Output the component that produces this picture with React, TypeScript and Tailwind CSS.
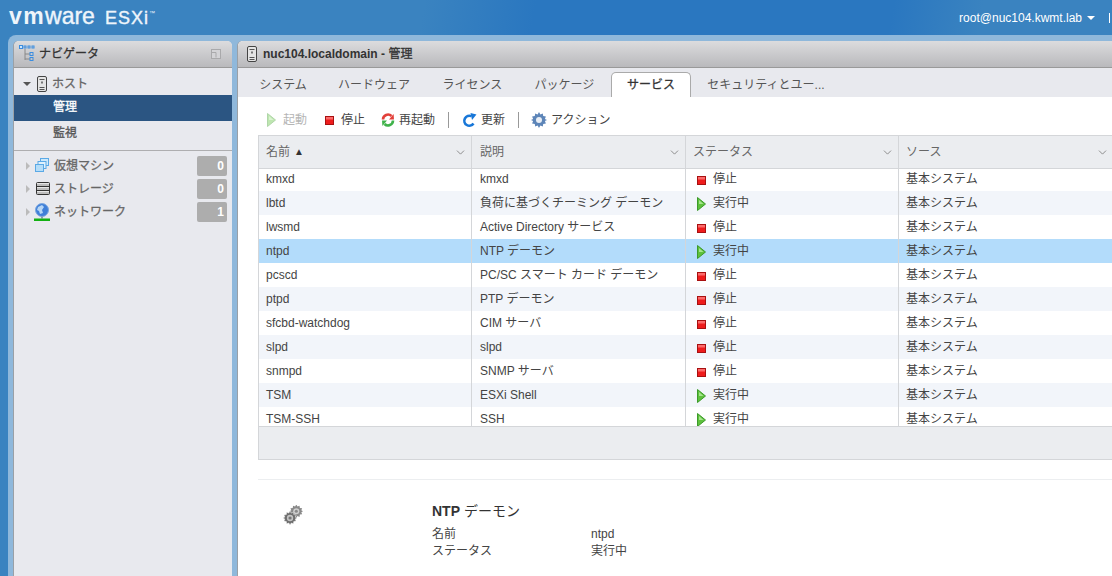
import React from 'react';
import { ChevronDown } from 'lucide-react';

const services = [
  ['kmxd', 'kmxd', false],
  ['lbtd', '負荷に基づくチーミング デーモン', true],
  ['lwsmd', 'Active Directory サービス', false],
  ['ntpd', 'NTP デーモン', true],
  ['pcscd', 'PC/SC スマート カード デーモン', false],
  ['ptpd', 'PTP デーモン', false],
  ['sfcbd-watchdog', 'CIM サーバ', false],
  ['slpd', 'slpd', false],
  ['snmpd', 'SNMP サーバ', false],
  ['TSM', 'ESXi Shell', true],
  ['TSM-SSH', 'SSH', true],
] as const;

const gearPath =
  'M8 0l1.4 2.4 2.4-1 .4 2.7 2.7.4-1 2.4L16 8l-2.1 1.1 1 2.4-2.7.4-.4 2.7-2.4-1L8 16l-1.4-2.4-2.4 1-.4-2.7-2.7-.4 1-2.4L0 8l2.1-1.1-1-2.4 2.7-.4.4-2.7 2.4 1Z';

const ServerIcon = ({ className = '' }: { className?: string }) => (
  <svg width="10" height="16" viewBox="0 0 10 16" className={className}>
    <rect x="0.5" y="0.5" width="9" height="15" rx="1.5" fill="#e4e4e4" stroke="#444" />
    <path d="M2.5 3.5h5M2.5 11.5h5M2.5 13.5h5" stroke="#555" />
    <rect x="4" y="5.5" width="2" height="2" fill="#777" />
  </svg>
);

const PlayIcon = ({ faded = false }: { faded?: boolean }) => (
  <svg width="9" height="14" viewBox="0 0 9 14" className={faded ? 'opacity-40' : ''}>
    <path d="M0.5 0.5L8.5 7L0.5 13.5Z" fill="#5ec13c" stroke="#3c9a2a" />
    <path d="M2 3L6.5 7L2 7Z" fill="#a5e58d" />
  </svg>
);

const StopIcon = () => (
  <svg width="9" height="9" viewBox="0 0 9 9">
    <rect x="0.5" y="0.5" width="8" height="8" fill="#ee1c1c" stroke="#a81010" />
    <rect x="1" y="1" width="7" height="2.5" fill="#fb6a6a" />
  </svg>
);

const RestartIcon = () => (
  <svg width="14" height="14" viewBox="0 0 14 14" fill="none">
    <path d="M2 6.5A5 5 0 0 1 10.5 3" stroke="#e2403a" strokeWidth="2.6" />
    <path d="M8 6.5L13 6.5L12.6 1Z" fill="#e2403a" />
    <path d="M12 7.5A5 5 0 0 1 3.5 11" stroke="#3fb24a" strokeWidth="2.6" />
    <path d="M6 7.5L1 7.5L1.4 13Z" fill="#3fb24a" />
  </svg>
);

const RefreshIcon = () => (
  <svg width="15" height="15" viewBox="0 0 15 15" fill="none">
    <path d="M11.5 10.5A5 5 0 1 1 9.5 3.2" stroke="#1877d8" strokeWidth="2.6" />
    <path d="M8.5 0L14.5 1.5L10 7Z" fill="#1877d8" />
  </svg>
);

const GearIcon = () => (
  <svg width="16" height="16" viewBox="0 0 16 16">
    <path d={gearPath} fill="#5d85b8" />
    <circle cx="8" cy="8" r="3" fill="#e9eef5" />
  </svg>
);

const ServicesGears = () => (
  <svg width="20" height="20" viewBox="0 0 20 20">
    <g transform="translate(6.5 -0.5) scale(0.85)">
      <path d={gearPath} fill="#8a8a8a" />
      <circle cx="8" cy="8" r="3.6" fill="#cfcfcf" />
      <circle cx="8" cy="8" r="1.8" fill="#8a8a8a" />
    </g>
    <g transform="translate(0 6) scale(0.88)">
      <path d={gearPath} fill="#6e6e6e" stroke="#fff" strokeWidth="0.5" />
      <circle cx="8" cy="8" r="3.6" fill="#c4c4c4" />
      <circle cx="8" cy="8" r="1.8" fill="#777" />
    </g>
  </svg>
);

const NavigatorIcon = () => (
  <svg width="16" height="18" viewBox="0 0 16 18" fill="none">
    <path d="M6 4v11M6 9h5M6 14h5" stroke="#888" />
    <rect x="0.5" y="0.5" width="3" height="3" fill="#cfe6fb" stroke="#3b8de0" />
    <rect x="5" y="1" width="2" height="2" stroke="#3b8de0" />
    <rect x="9" y="1" width="2" height="2" stroke="#3b8de0" />
    <rect x="13" y="1" width="2" height="2" stroke="#3b8de0" />
    <rect x="11" y="7.5" width="3" height="3" stroke="#3b8de0" />
    <rect x="11" y="12.5" width="3" height="3" stroke="#3b8de0" />
  </svg>
);

const MinimizeIcon = () => (
  <svg width="10" height="10" viewBox="0 0 10 10">
    <rect x="0.5" y="0.5" width="9" height="9" fill="#d3d3d6" stroke="#a9a9ab" />
    <path d="M1 3.5h4v5" fill="none" stroke="#a9a9ab" />
  </svg>
);

const VmIcon = () => (
  <svg width="15" height="15" viewBox="0 0 15 15">
    <rect x="5.5" y="0.5" width="8" height="7" fill="#cde8fb" stroke="#5aa9e6" />
    <rect x="3" y="3.5" width="8" height="7" fill="#dff1fd" stroke="#5aa9e6" />
    <rect x="0.5" y="6.5" width="8" height="7" fill="#b5ddf8" stroke="#5aa9e6" />
  </svg>
);

const StorageIcon = () => (
  <svg width="14" height="13" viewBox="0 0 14 13">
    <rect x="0.5" y="0.5" width="13" height="12" rx="1" fill="#bdbdbd" stroke="#333" />
    <path d="M1 4.5h12M1 8.5h12" stroke="#333" />
    <path d="M1 1.5h12M1 5.5h12M1 9.5h12" stroke="#e6e6e6" />
  </svg>
);

const NetworkIcon = () => (
  <svg width="17" height="18" viewBox="0 0 17 18">
    <circle cx="8" cy="7" r="6.5" fill="#3f7fd8" stroke="#7da7df" />
    <path d="M4 4l4-2 2 2-2 3 1 3-3 1-1-3-2-1Z" fill="#b7d6f5" />
    <path d="M7 13.5h2v2H7z" fill="#8a9bb0" />
    <rect x="0" y="15.5" width="16" height="2.5" fill="#12b012" />
  </svg>
);

const Caret = ({ open = false }: { open?: boolean }) =>
  open ? (
    <div className="h-0 w-0 border-x-[4px] border-t-[4px] border-x-transparent border-t-[#555]" />
  ) : (
    <div className="h-0 w-0 border-y-[4px] border-l-[4px] border-y-transparent border-l-[#bbb]" />
  );

const NavItem = ({ icon, label, count }: { icon: React.ReactNode; label: string; count: number }) => (
  <div className="flex h-[23px] items-center pl-[11px] pr-[5px] text-xs text-[#666] [-webkit-text-stroke:0.3px]">
    <Caret />
    <div className="flex w-[23px] justify-center pl-[2px]">{icon}</div>
    <span className="ml-px flex-1">{label}</span>
    <div className="flex h-5 w-[30px] items-center justify-end rounded-[2px] bg-[#adadad] pr-[3px] text-xs font-bold text-white [-webkit-text-stroke:0]">
      {count}
    </div>
  </div>
);

const ToolButton = ({ icon, label, muted = false, iconWidth = 'w-[18px]' }: { icon: React.ReactNode; label: string; muted?: boolean; iconWidth?: string }) => (
  <div className={`flex items-center gap-[2px] text-xs ${muted ? 'text-[#b5b5b5]' : 'text-[#444]'}`}>
    <div className={`flex justify-start ${iconWidth}`}>{icon}</div>
    <span>{label}</span>
  </div>
);

const HeaderCell = ({ label, sorted = false, pad = 'pl-[7px]' }: { label: string; sorted?: boolean; pad?: string }) => (
  <div className={`flex items-center border-r border-[#d4d6d9] pr-[4px] text-xs text-[#666] last:border-r-0 ${pad}`}>
    <span>{label}</span>
    {sorted && <span className="ml-1 text-[10px] text-[#333]">▲</span>}
    <ChevronDown size={13} strokeWidth={1.5} className="ml-auto text-[#777]" />
  </div>
);

export default function App() {
  return (
    <div className="flex h-[576px] w-[1112px] flex-col overflow-hidden bg-[#3a83c0] font-['Liberation_Sans','Noto_Sans_CJK_JP',sans-serif]">
      <header className="flex h-[35px] shrink-0 items-center justify-between bg-[linear-gradient(100deg,#3a83c0_0%,#3a83c0_38%,#2a77c0_48%,#2a77c0_80%,#3a83c0_88%)] pl-[9px] pr-[2px] text-white">
        <div className="flex items-baseline pb-[3px] text-[#eef5fb]">
          <span className="text-[23px] leading-none font-bold tracking-[1.4px]">vm</span>
          <span className="text-[23px] leading-none [-webkit-text-stroke:0.4px]">ware</span>
          <span className="ml-[10px] text-lg leading-none tracking-[1px] [-webkit-text-stroke:0.4px]">ESXi</span>
          <span className="-translate-y-[9px] text-[6px] leading-none">™</span>
        </div>
        <div className="flex items-center text-xs">
          <span>root@nuc104.kwmt.lab</span>
          <div className="ml-[5px] h-0 w-0 border-x-[4px] border-t-[4px] border-x-transparent border-t-white" />
          <div className="ml-[14px] h-[10px] w-px bg-white" />
        </div>
      </header>

      <div className="ml-2 flex min-h-0 flex-1 gap-[6px] rounded-tl-lg bg-[#8fb8db] pt-[6px] pl-[6px]">
        <aside className="flex w-[218px] shrink-0 flex-col rounded-t-[5px] bg-[#e8e9ee] shadow-[-1px_0_0_#9aa0a6]">
          <div className="flex h-[27px] shrink-0 items-center rounded-t-[5px] border-b border-[#999] bg-gradient-to-b from-[#dcdcde] to-[#b9b9bc] pl-[5px] pr-[11px] text-xs text-[#333] [-webkit-text-stroke:0.3px]">
            <NavigatorIcon />
            <span className="ml-[4px] flex-1">ナビゲータ</span>
            <MinimizeIcon />
          </div>
          <div className="flex h-[27px] items-center pt-[4px] pl-[9px] text-xs text-[#666] [-webkit-text-stroke:0.3px]">
            <Caret open />
            <ServerIcon className="ml-[6px]" />
            <span className="ml-[5px]">ホスト</span>
          </div>
          <div className="flex h-[26px] items-center bg-[#2b5582] pb-[2px] pl-[39px] text-xs text-white [-webkit-text-stroke:0.3px]">管理</div>
          <div className="flex h-[30px] items-center border-b border-[#aeaeb0] pb-[5px] pl-[39px] text-xs text-[#555] [-webkit-text-stroke:0.3px]">監視</div>
          <div className="pt-[3px] pl-px">
            <NavItem icon={<VmIcon />} label="仮想マシン" count={0} />
            <NavItem icon={<StorageIcon />} label="ストレージ" count={0} />
            <NavItem icon={<NetworkIcon />} label="ネットワーク" count={1} />
          </div>
        </aside>

        <main className="flex min-w-0 flex-1 flex-col overflow-hidden rounded-tl-[5px] bg-white shadow-[-1px_0_0_#9aa0a6]">
          <div className="flex h-[27px] shrink-0 items-center border-b border-[#999] bg-gradient-to-b from-[#dcdcde] to-[#b9b9bc] pl-[9px] text-xs font-bold text-[#333]">
            <ServerIcon />
            <span className="ml-[6px]">
              nuc104.localdomain - <span className="font-normal [-webkit-text-stroke:0.3px]">管理</span>
            </span>
          </div>

          <div className="flex h-[29px] shrink-0 items-end bg-[#e8e9ee] pl-[7px] text-xs text-[#555]">
            <div className="flex h-[25px] w-[76px] items-center justify-center">システム</div>
            <div className="flex h-[25px] w-[106px] items-center justify-center">ハードウェア</div>
            <div className="flex h-[25px] w-[91px] items-center justify-center">ライセンス</div>
            <div className="flex h-[25px] w-[93px] items-center justify-center">パッケージ</div>
            <div className="flex h-[25px] w-[80px] items-center justify-center rounded-t-[5px] border border-b-0 border-[#aaa] bg-white text-[#333] [-webkit-text-stroke:0.3px]">サービス</div>
            <div className="flex h-[25px] w-[150px] items-center justify-center">セキュリティとユー...</div>
          </div>

          <div className="flex h-[38px] shrink-0 items-center pl-[29px] pt-[8px]">
            <ToolButton muted icon={<PlayIcon faded />} label="起動" iconWidth="w-[14px]" />
            <div className="ml-[18px]"><ToolButton icon={<StopIcon />} label="停止" iconWidth="w-[14px]" /></div>
            <div className="ml-[16px]"><ToolButton icon={<RestartIcon />} label="再起動" iconWidth="w-[16px]" /></div>
            <div className="mx-[13px] h-[16px] w-px bg-[#999]" />
            <ToolButton icon={<RefreshIcon />} label="更新" iconWidth="w-[17px]" />
            <div className="ml-[13px] mr-[12px] h-[16px] w-px bg-[#999]" />
            <ToolButton icon={<GearIcon />} label="アクション" iconWidth="w-[18px]" />
          </div>

          <div className="ml-5 w-[874px] shrink-0 border border-[#d4d6d9] bg-white">
            <div className="relative z-10 grid h-[33px] grid-cols-[213px_214px_213px_214px] border-b border-[#d4d6d9] bg-[#ebedf0]">
              <HeaderCell label="名前" sorted />
              <HeaderCell label="説明" pad="pl-2" />
              <HeaderCell label="ステータス" />
              <HeaderCell label="ソース" />
            </div>
            <div className="-mt-[2px] h-[260px] overflow-hidden border-b border-[#d4d6d9]">
              {services.map(([name, description, running], i) => (
                <div
                  key={name}
                  className={`grid h-6 grid-cols-[213px_214px_213px_214px] text-xs text-[#444] ${
                    name === 'ntpd' ? 'bg-[#b3dcfb]' : i % 2 === 1 ? 'bg-[#f2f5fa]' : 'bg-white'
                  }`}
                >
                  <div className="flex items-center border-r border-[#d4d6d9] pb-px pl-[7px]">{name}</div>
                  <div className="flex items-center border-r border-[#d4d6d9] pb-px pl-2">{description}</div>
                  <div className="flex items-center border-r border-[#d4d6d9] pl-[11px]">
                    <div className={`flex w-[16px] items-center ${running ? 'mt-px' : 'mt-[2px]'}`}>
                      {running ? <PlayIcon /> : <StopIcon />}
                    </div>
                    <span className="pb-px">{running ? '実行中' : '停止'}</span>
                  </div>
                  <div className="flex items-center pb-px pl-[7px]">基本システム</div>
                </div>
              ))}
            </div>
            <div className="h-[32px] bg-[#ebedf0]" />
          </div>

          <div className="ml-5 mt-[19px] flex border-t border-[#eceef0] pt-[21px]">
            <div className="w-[174px] pl-[25px] pt-[4px]">
              <ServicesGears />
            </div>
            <div className="text-xs text-[#444]">
              <div className="text-sm leading-[20px] text-[#333]">
                <span className="font-bold">NTP</span> デーモン
              </div>
              <div className="mt-[5px] grid grid-cols-[159px_auto] leading-[17px]">
                <span>名前</span>
                <span>ntpd</span>
                <span>ステータス</span>
                <span>実行中</span>
              </div>
            </div>
          </div>
        </main>
      </div>
    </div>
  );
}
